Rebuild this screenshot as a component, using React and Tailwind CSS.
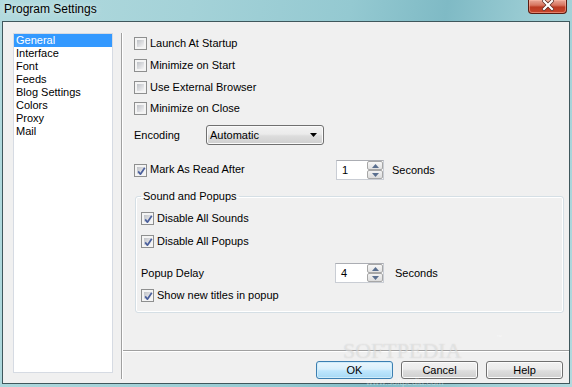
import React from "react";

function Check({ checked }) {
  return (
    <span className="relative w-[13px] h-[13px] shrink-0 border border-[#8e8f8f] bg-[#f4f4f4] p-[2px] flex">
      <span className="flex-1 bg-[linear-gradient(135deg,#bfc2c7,#dcdde0_55%,#f5f5f5)]"></span>
      {checked && (
        <svg className="absolute left-[1px] top-[1px]" width="11" height="11" viewBox="0 0 11 11">
          <path d="M2.2 5.4 L4.4 8.2 L8.8 1.8" fill="none" stroke="#4a5f9c" strokeWidth="1.7" strokeLinejoin="round" />
        </svg>
      )}
    </span>
  );
}

function CheckRow({ checked, label, className = "" }) {
  return (
    <div className={"flex items-center h-[13px] " + className}>
      <Check checked={checked} />
      <span className="ml-[3px] leading-[13px] -mt-[1px] whitespace-nowrap">{label}</span>
    </div>
  );
}

function Spin({ value, w }) {
  return (
    <div className={"flex h-[20px] bg-white border border-[#c9cdd4] border-t-[#abadb3] " + w}>
      <span className="flex-1 flex items-center pl-[5px]">{value}</span>
      <div className="w-[16px] flex flex-col">
        <div className="h-[9px] border border-[#a7a7a7] rounded-[2px] bg-[linear-gradient(#f7f7f7,#e2e2e2)] flex items-center justify-center">
          <svg width="7" height="4" viewBox="0 0 7 4">
            <path d="M0 4 L3.5 0 L7 4Z" fill="#5a6f8f" />
          </svg>
        </div>
        <div className="h-[9px] border border-[#a7a7a7] rounded-[2px] bg-[linear-gradient(#f2f2f2,#dcdcdc)] flex items-center justify-center">
          <svg width="7" height="4" viewBox="0 0 7 4">
            <path d="M0 0 L3.5 4 L7 0Z" fill="#5a6f8f" />
          </svg>
        </div>
      </div>
    </div>
  );
}

function Btn({ label, primary }) {
  return (
    <div
      className={
        "w-[77px] h-[18px] rounded-[3px] flex items-center justify-center leading-none " +
        (primary
          ? "border border-[#3c7fb1] bg-[linear-gradient(#eaf6fd_0%,#d9f0fc_45%,#bee6fd_55%,#a7d9f5_100%)] shadow-[inset_0_0_0_1px_#d0ecfa]"
          : "border border-[#707070] bg-[linear-gradient(#f2f2f2_0%,#ebebeb_45%,#dddddd_55%,#cfcfcf_100%)] shadow-[inset_0_0_0_1px_#fcfcfc]")
      }
    >
      {label}
    </div>
  );
}

export default function App() {
  const items = ["General", "Interface", "Font", "Feeds", "Blog Settings", "Colors", "Proxy", "Mail"];
  return (
    <div className="relative w-[572px] h-[387px] overflow-hidden flex flex-col text-[11px] text-black font-['Liberation_Sans',Arial,sans-serif] bg-[linear-gradient(100deg,#b2dade_0%,#a4d2d8_30%,#94c9d1_55%,#7fbac5_70%,#9ccdd4_84%,#b2d9de_100%)]">
      {/* title bar */}
      <div className="h-[21px] flex items-start shrink-0">
        <span className="pl-[4px] pt-[2px] text-[12px] leading-[15px] text-black [text-shadow:0_0_6px_rgba(255,255,255,0.8)]">
          Program Settings
        </span>
        <div className="ml-auto mr-[5px] w-[39px] h-[14px] rounded-b-[4px] border border-t-0 border-[#5a1c12] bg-[linear-gradient(#e9a898_0%,#d77560_40%,#bb3a22_55%,#c7462c_100%)] flex items-start justify-center shadow-[inset_0_0_0_1px_rgba(255,190,170,0.5)]">
          <svg width="12" height="11" viewBox="0 0 12 11">
            <path d="M2 1 L10 9 M10 1 L2 9" stroke="#5a2a22" strokeWidth="3.6" strokeLinecap="square" />
            <path d="M2 1 L10 9 M10 1 L2 9" stroke="#ffffff" strokeWidth="2.2" strokeLinecap="square" />
          </svg>
        </div>
      </div>

      {/* client */}
      <div className="flex-1 mx-[2px] mb-[3px] border border-[#3f575c] bg-[#f0f0f0] flex min-h-0">
        {/* list */}
        <div className="ml-[10px] mt-[11px] mb-[10px] w-[100px] border border-[#d6dbe3] bg-white flex flex-col">
          {items.map((it, i) => (
            <div
              key={it}
              className={
                "h-[13px] leading-[13px] pl-[2px] whitespace-nowrap " +
                (i === 0 ? "bg-[#3399ff] text-white" : "")
              }
            >
              {it}
            </div>
          ))}
        </div>

        {/* vertical separator */}
        <div className="ml-[8px] mt-[11px] mb-[4px] w-[2px] border-l border-l-[#a0a0a0] border-r border-r-white"></div>

        {/* right column */}
        <div className="flex-1 flex flex-col min-w-0">
          <div className="flex-1 flex flex-col pl-[11px] pr-[5px]">
            <CheckRow label="Launch At Startup" className="mt-[15px]" />
            <CheckRow label="Minimize on Start" className="mt-[9px]" />
            <CheckRow label="Use External Browser" className="mt-[9px]" />
            <CheckRow label="Minimize on Close" className="mt-[8px]" />

            <div className="mt-[10px] h-[20px] flex items-center">
              <span className="w-[72px]">Encoding</span>
              <div className="w-[118px] h-[20px] rounded-[3px] border border-[#707070] bg-[linear-gradient(#f2f2f2_0%,#ebebeb_45%,#dddddd_55%,#cfcfcf_100%)] shadow-[inset_0_0_0_1px_#fafafa] flex items-center pl-[3px] pr-[6px]">
                <span className="flex-1">Automatic</span>
                <svg width="7" height="4" viewBox="0 0 7 4">
                  <path d="M0 0 L7 0 L3.5 4Z" fill="#000" />
                </svg>
              </div>
            </div>

            <div className="mt-[15px] h-[20px] flex items-center">
              <div className="w-[202px] flex items-center">
                <Check checked />
                <span className="ml-[3px] -mt-[1px]">Mark As Read After</span>
              </div>
              <Spin value="1" w="w-[48px]" />
              <span className="ml-[8px]">Seconds</span>
            </div>

            <fieldset className="mt-[10px] ml-[1px] border border-[#d5dfe5] rounded-[3px] pl-[5px] pr-[5px] pb-[10px] shadow-[inset_0_0_0_1px_#ffffff]">
              <legend className="px-[2px] leading-[13px]">Sound and Popups</legend>
              <CheckRow checked label="Disable All Sounds" className="mt-[9px]" />
              <CheckRow checked label="Disable All Popups" className="mt-[10px]" />
              <div className="mt-[15px] h-[20px] flex items-center">
                <span className="w-[194px]">Popup Delay</span>
                <Spin value="4" w="w-[49px]" />
                <span className="ml-[11px]">Seconds</span>
              </div>
              <CheckRow checked label="Show new titles in popup" className="mt-[6px]" />
            </fieldset>
          </div>

          {/* horizontal separator */}
          <div className="h-[2px] border-t border-t-[#a0a0a0] border-b border-b-white"></div>

          {/* buttons */}
          <div className="h-[31px] shrink-0 flex justify-end items-start gap-[8px] pr-[6px] pt-[9px]">
            <Btn label="OK" primary />
            <Btn label="Cancel" />
            <Btn label="Help" />
          </div>
        </div>
      </div>

      {/* watermark overlay */}
      <span className="absolute left-[343px] top-[340px] text-[22px] leading-none text-white/40 [text-shadow:0_0_1px_rgba(150,150,150,0.4)] pointer-events-none font-['Liberation_Serif',serif]">
        SOFTPEDIA
      </span>
      <span className="absolute left-[496px] top-[334px] text-[6px] leading-none text-white/50 pointer-events-none">™</span>
      <span className="absolute left-[366px] top-[378px] text-[9px] leading-none text-white/40 pointer-events-none">
        www.softpedia.com
      </span>
    </div>
  );
}
